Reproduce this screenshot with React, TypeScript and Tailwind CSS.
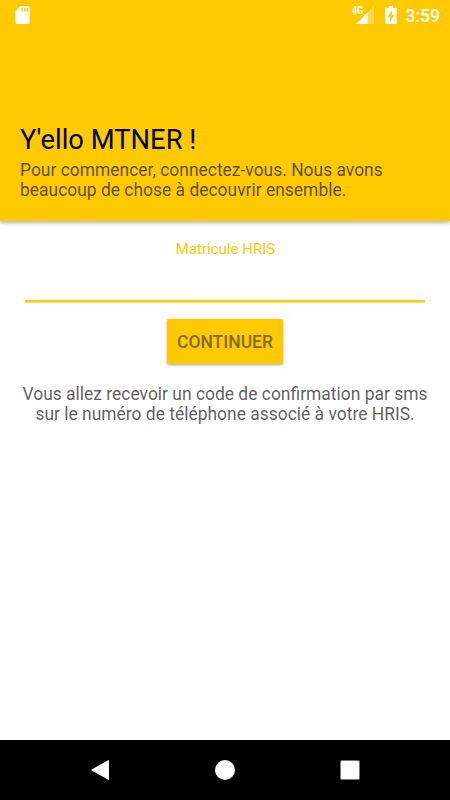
function StatusBar() {
  return (
    <div className="flex h-[30px] items-center pl-[15px] pr-[10px] text-white">
      <svg width="15" height="18" viewBox="0 0 15 18" className="mr-auto">
        <path d="M5.5 0H13a1.6 1.6 0 0 1 1.6 1.6v14.8A1.6 1.6 0 0 1 13 18H2a1.6 1.6 0 0 1-1.6-1.6V5.4z" fill="currentColor" />
        <path d="M7 2v3.6M9.7 2v3.6M12.3 2v3.6" stroke="#ffcb00" strokeWidth="1.5" />
      </svg>
      <svg width="24" height="24" viewBox="0 -3 24 24" className="mr-[9px] overflow-visible">
        <path d="M22 0v18H4z" fill="white" fillOpacity="0.3" />
        <path d="M15.5 6.5V18H4z" fill="white" />
        <text x="0" y="8" fontSize="10.5" fontWeight="700" textLength="11" lengthAdjust="spacingAndGlyphs" fill="white">4G</text>
      </svg>
      <svg width="12" height="18" viewBox="0 0 12 18" className="mr-[9px]">
        <path d="M4 0h4v1.8h2.7a1 1 0 0 1 1 1V17a1 1 0 0 1-1 1H1.3a1 1 0 0 1-1-1V2.8a1 1 0 0 1 1-1H4z" fill="currentColor" />
        <path d="M7 4.8v4.1h2.4L5 15.6v-4.8H2.6z" fill="#ffcb00" />
      </svg>
      <span className="pt-0.5 text-[17.5px] font-medium">3:59</span>
    </div>
  );
}

export default function App() {
  return (
    <div className="flex h-[800px] w-[450px] flex-col overflow-hidden bg-white font-['Roboto',sans-serif]">
      <header className="z-10 flex h-[221px] shrink-0 flex-col bg-[#ffcb00] shadow-[0_2px_4px_rgba(0,0,0,0.3)]">
        <StatusBar />
        <div className="mt-[92px] px-5">
          <h1 className="text-[27.4px] leading-9 text-black">Y'ello MTNER !</h1>
          <p className="mt-0.5 text-[17.45px] leading-5 text-black/65">
            Pour commencer, connectez-vous. Nous avons
            <br />
            beaucoup de chose à decouvrir ensemble.
          </p>
        </div>
      </header>
      <main className="flex grow flex-col items-center">
        <label className="mt-[18px] pl-px text-[15px] leading-5 text-[#ffcb00]">Matricule HRIS</label>
        <div className="mt-[41px] h-[3px] w-[400px] border-b border-[#ffe580] bg-[#ffcb00]" />
        <button className="mt-4 h-[45px] w-[116px] rounded-xs bg-[#ffcb00] pt-0.5 text-[17.5px] font-medium text-[#856a00] shadow-[0_1px_3px_rgba(0,0,0,0.35)]">
          CONTINUER
        </button>
        <p className="mt-5 text-center text-[17.45px] leading-5 text-black/65">
          Vous allez recevoir un code de confirmation par sms
          <br />
          sur le numéro de téléphone associé à votre HRIS.
        </p>
      </main>
      <nav className="flex h-[60px] items-center justify-between bg-black pl-[90px] pr-[90px] text-white">
        <svg width="20" height="22" viewBox="0 0 20 22">
          <path d="M18.2 1.2a.6.6 0 0 1 .8.6v18.4a.6.6 0 0 1-.8.6L1.7 11.6a.7.7 0 0 1 0-1.2z" fill="currentColor" />
        </svg>
        <div className="size-5 rounded-full bg-white" />
        <div className="size-5 rounded-xs border border-[#777] bg-white" />
      </nav>
    </div>
  );
}
